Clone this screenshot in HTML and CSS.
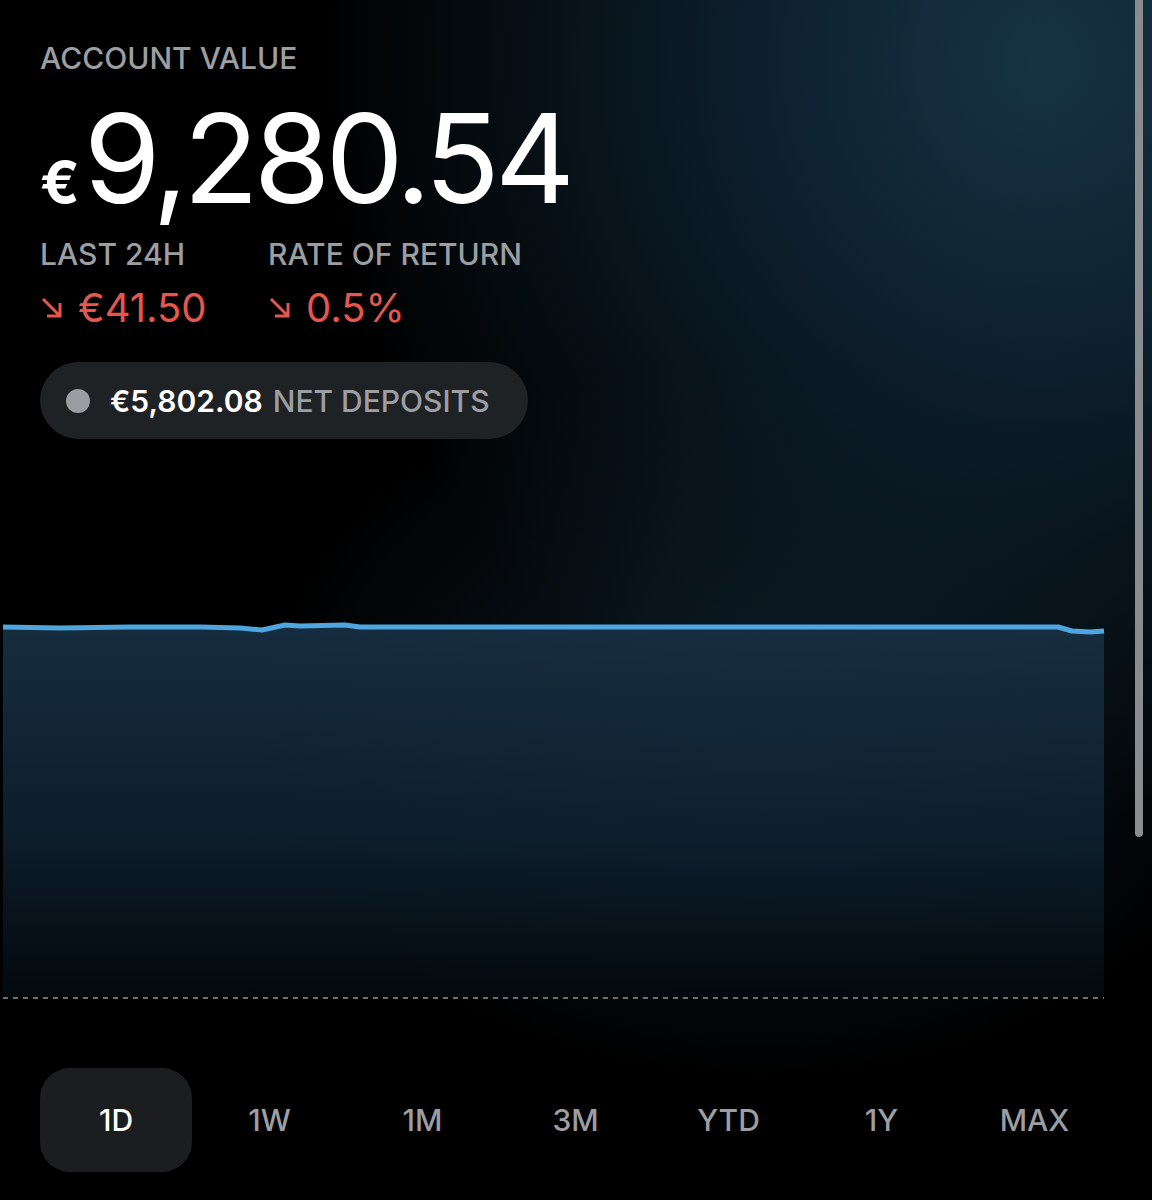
FILE: index.html
```html
<!DOCTYPE html>
<html lang="en">
<head>
  <meta charset="utf-8">
  <title>Account value</title>
  <link rel="stylesheet" href="styles.css">
</head>
<body>
  <div class="page">
    <div class="summary">
      <div class="label">ACCOUNT VALUE</div>
      <div class="total"><span class="cur">€</span>9,280.54</div>
      <div class="stats">
        <div class="stat">
          <div class="label">LAST 24H</div>
          <div class="change">
            <svg class="arrow" width="24" height="24" viewBox="0 0 24 24"><path d="M3 3 L20 20 M20 7 V20 H7" fill="none" stroke="#e5574e" stroke-width="3"/></svg>
            <span>€41.50</span>
          </div>
        </div>
        <div class="stat">
          <div class="label">RATE OF RETURN</div>
          <div class="change">
            <svg class="arrow" width="24" height="24" viewBox="0 0 24 24"><path d="M3 3 L20 20 M20 7 V20 H7" fill="none" stroke="#e5574e" stroke-width="3"/></svg>
            <span>0.5%</span>
          </div>
        </div>
      </div>
      <div class="pill">
        <span class="dot"></span>
        <span class="amount">€5,802.08</span>
        <span class="pill-label">NET DEPOSITS</span>
      </div>
    </div>

    <div class="chart">
      <svg width="1152" height="410" viewBox="0 0 1152 410">
        <defs>
          <linearGradient id="fill" x1="0" y1="0" x2="0" y2="1">
            <stop offset="0" stop-color="#172f42" stop-opacity="0.95"/>
            <stop offset="0.55" stop-color="#0e2130" stop-opacity="0.9"/>
            <stop offset="1" stop-color="#03090e" stop-opacity="0.9"/>
          </linearGradient>
        </defs>
        <!-- area under the line -->
        <path d="M3 27 L60 28 L130 27 L200 27 L240 28 L262 30 L285 25 L300 26 L345 25 L360 27 L1058 27 L1072 31 L1090 32 L1104 31 L1104 398 L3 398 Z" fill="url(#fill)"/>
        <line x1="3" y1="398" x2="1104" y2="398" stroke="#6b7075" stroke-width="2" stroke-dasharray="5 5"/>
        <path d="M3 27 L60 28 L130 27 L200 27 L240 28 L262 30 L285 25 L300 26 L345 25 L360 27 L1058 27 L1072 31 L1090 32 L1104 31" fill="none" stroke="#4fa5de" stroke-width="5" stroke-linejoin="round"/>
      </svg>
    </div>

    <div class="ranges">
      <div class="range active">1D</div>
      <div class="range">1W</div>
      <div class="range">1M</div>
      <div class="range">3M</div>
      <div class="range">YTD</div>
      <div class="range">1Y</div>
      <div class="range">MAX</div>
    </div>

    <div class="scrollbar"></div>
  </div>
</body>
</html>
```

FILE: styles.css
```css
html, body {
  margin: 0;
  padding: 0;
}
body {
  background: #000;
  font-family: Inter, "Liberation Sans", sans-serif;
  color: #fff;
}
.page {
  position: relative;
  width: 1152px;
  height: 1200px;
  overflow: hidden;
  background:
    radial-gradient(ellipse 720px 760px at 1040px 60px, #173343 0%, #0e2230 35%, rgba(0, 0, 0, 0) 100%),
    radial-gradient(ellipse 500px 360px at 760px 720px, rgba(22, 48, 66, 0.55) 0%, rgba(0, 0, 0, 0) 100%),
    #000;
}
.summary {
  padding: 40px 40px 0;
}
.label {
  font-size: 30px;
  line-height: 36px;
  font-weight: 500;
  color: #9c9ea1;
}
.total {
  margin-top: 30px;
  font-size: 124px;
  line-height: 104px;
  font-weight: 400;
  letter-spacing: -5px;
}
.total .cur {
  font-size: 58px;
  font-weight: 700;
  letter-spacing: 0;
  margin-right: 4px;
}
.stats {
  display: grid;
  grid-template-columns: 228px auto;
  margin-top: 2px;
}
.change {
  display: flex;
  align-items: center;
  gap: 14px;
  margin-top: 16px;
  font-size: 40px;
  line-height: 40px;
  color: #e5574e;
}
.arrow {
  flex: none;
}
.pill {
  display: inline-flex;
  align-items: center;
  margin-top: 34px;
  height: 77px;
  padding: 0 38px 0 26px;
  border-radius: 39px;
  background: #1f2225;
  font-size: 30px;
  font-weight: 500;
}
.dot {
  width: 24px;
  height: 24px;
  border-radius: 50%;
  background: #9a9da1;
  margin-right: 20px;
}
.amount {
  color: #fff;
  font-weight: 600;
  margin-right: 10px;
}
.pill-label {
  color: #9c9ea1;
}
.chart {
  margin-top: 161px;
  height: 410px;
}
.chart svg {
  display: block;
}
.ranges {
  display: grid;
  grid-template-columns: repeat(7, 153px);
  margin: 58px 0 0 40px;
}
.range {
  height: 104px;
  display: flex;
  align-items: center;
  justify-content: center;
  font-size: 30px;
  font-weight: 500;
  color: #9c9ea1;
  border-radius: 30px;
}
.range.active {
  width: 152px;
  background: #1c1d1f;
  color: #fff;
}
.scrollbar {
  position: absolute;
  top: 0;
  left: 1135px;
  width: 8px;
  height: 837px;
  border-radius: 0 0 4px 4px;
  background: #8a8d90;
}
```
